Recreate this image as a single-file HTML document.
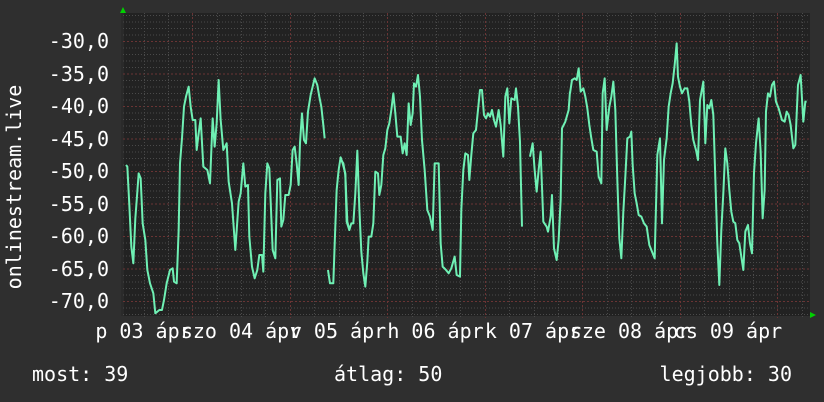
<!DOCTYPE html>
<html><head><meta charset="utf-8"><style>
html,body{margin:0;padding:0;background:#2f2f2f;}
svg{display:block}
text{font-family:"DejaVu Sans Mono","Liberation Mono",monospace;font-size:20px;fill:#fff}
</style></head><body>
<svg width="824" height="402" viewBox="0 0 824 402" xmlns="http://www.w3.org/2000/svg">
<rect x="0" y="0" width="824" height="402" fill="#2f2f2f"/>
<rect x="121" y="13" width="689" height="303" fill="#222222"/>
<rect x="121" y="13" width="3" height="303" fill="#2a2a2a"/>
<g id="grid"></g>
<g fill="none" stroke="#6ff0b4" stroke-width="2" stroke-linejoin="round">
<polyline vector-effect="non-scaling-stroke" transform="translate(120,30) scale(0.3333)" points="18,405 22,410 28,525 34,650 40,700 46,565 52,485 56,430 62,445 68,580 76,630 82,720 90,760 100,790 106,850 118,840 126,840 132,810 140,760 150,720 158,715 162,755 170,760 176,600 180,400 186,325 192,230 198,200 206,170 212,230 218,270 226,270 230,360 236,310 242,265 250,410 262,420 270,460 278,265 284,350 290,280 296,150 302,270 310,360 320,340 326,455 336,520 346,660 356,515 362,490 370,400 376,470 384,465 388,620 396,710 404,745 412,720 418,675 426,675 430,725 436,490 442,400 448,415 458,660 466,685 472,450 480,445 484,590 490,570 496,495 506,495 512,465 518,360 524,350 530,400 536,465 540,340 546,250 552,330 558,340 564,245 572,195 584,145 592,165 598,200 604,230 610,285 614,325"/>
<polyline vector-effect="non-scaling-stroke" transform="translate(120,30) scale(0.3333)" points="624,720 630,760 640,760 644,645 650,480 656,420 662,382 668,400 676,430 680,575 688,600 690,600"/>
<polyline vector-effect="non-scaling-stroke" transform="translate(340,30) scale(0.3333)" points="0,385 10,400 16,435 22,575 28,600 34,580 40,580 46,490 52,362 58,535 64,665 70,730 76,770 82,695 86,620 94,620 100,580 106,425 114,430 118,495 124,465 130,375 136,355 142,300 148,280 154,240 160,190 166,250 172,320 182,320 188,370 194,340 200,375 206,220 212,285 218,250 222,160 228,170 234,135 240,200 246,330 254,420 262,540 270,560 278,600 284,400 296,400 302,640 308,710 318,720 326,730 334,715 344,680 350,735 360,740 364,540 370,420 376,370 384,375 388,450 394,375 400,310 408,300 414,240 420,180 426,180 432,255 438,265 444,250 450,260 456,240 462,270 468,290 476,240 482,285 490,380 496,200 502,175 508,280 514,205 524,210 528,175 534,230 540,335 546,590"/>
<polyline vector-effect="non-scaling-stroke" transform="translate(340,30) scale(0.3333)" points="570,380 578,340 584,420 590,485 596,420 602,365 610,575 620,590 624,605 632,560 636,495 642,655 650,690 656,630 662,510 666,295 676,275 686,240 690,185"/>
<polyline vector-effect="non-scaling-stroke" transform="translate(570,30) scale(0.3333)" points="0,190 6,150 14,145 20,150 26,115 32,185 40,175 46,200 52,235 58,285 64,325 70,360 80,365 86,440 94,460 98,190 104,145 110,300 118,230 124,200 130,155 136,240 142,450 148,625 154,685 160,545 166,440 172,325 180,320 184,305 188,405 194,490 200,520 206,555 214,560 222,580 230,590 238,645 246,665 254,685 262,375 270,325 276,580 282,390 290,325 296,230 302,190 308,160 314,105 320,40 324,140 330,170 336,190 344,175 352,175 358,215 364,285 370,330 378,360 384,390 390,210 400,155 406,340 412,225 418,235 424,210 430,255 436,445 442,640 448,765 454,600 460,490 466,355 472,400 478,480 484,545 490,575 496,580 502,630 508,640 514,680 520,720 526,605 534,585 540,640 546,670 552,430 558,340 566,265 572,365 578,565 584,480 588,245 594,190 600,200 606,165 612,155 618,215 626,235 636,270 644,275 650,245 656,255 662,285 670,355 676,345 684,165 692,135 700,275 706,215 710,215"/>
</g>
<polygon points="120,13 126,13 123,7" fill="#00d000"/>
<polygon points="810,312 810,318 816,315" fill="#00d000"/>
<g text-anchor="end">
<text x="109" y="48">-30,0</text>
<text x="109" y="81">-35,0</text>
<text x="109" y="113">-40,0</text>
<text x="109" y="146">-45,0</text>
<text x="109" y="178">-50,0</text>
<text x="109" y="211">-55,0</text>
<text x="109" y="243">-60,0</text>
<text x="109" y="276">-65,0</text>
<text x="109" y="308">-70,0</text>
</g>
<text transform="translate(21,187) rotate(-90)" text-anchor="middle">onlinestream.live</text>
<g text-anchor="middle">
<text x="143.5" y="338">p 03 ápr</text>
<text x="241" y="338">szo 04 ápr</text>
<text x="338" y="338">v 05 ápr</text>
<text x="435.5" y="338">h 06 ápr</text>
<text x="533" y="338">k 07 ápr</text>
<text x="630" y="338">sze 08 ápr</text>
<text x="728" y="338">cs 09 ápr</text>
</g>
<text x="32" y="381">most: 39</text>
<text x="334" y="381">átlag: 50</text>
<text x="792" y="381" text-anchor="end">legjobb: 30</text>
</svg>
<script>
(function(){
var g=document.getElementById('grid'),ns='http://www.w3.org/2000/svg',s='';
for(var v=-26;v>=-72;v--){var y=41+(-30-v)*6.5+0.5;var red=(v%5===0);
s+='<line x1="123" x2="810" y1="'+y+'" y2="'+y+'" stroke="'+(red?'#6a3434':'#4a4a4a')+'" stroke-width="1" stroke-dasharray="'+(red?'2,2':'1,2')+'"/>';}
for(var i=0;i<30;i++){var x=143.5+i*24.375;if(x>808)break;var red=((i+2)%4===0);var xx=Math.round(x)+0.5;
s+='<line x1="'+xx+'" x2="'+xx+'" y1="13" y2="318" stroke="'+(red?'#6a3434':'#4a4a4a')+'" stroke-width="1" stroke-dasharray="'+(red?'2,2':'1,2')+'"/>';}
g.innerHTML=s;})();
</script>
</body></html>
